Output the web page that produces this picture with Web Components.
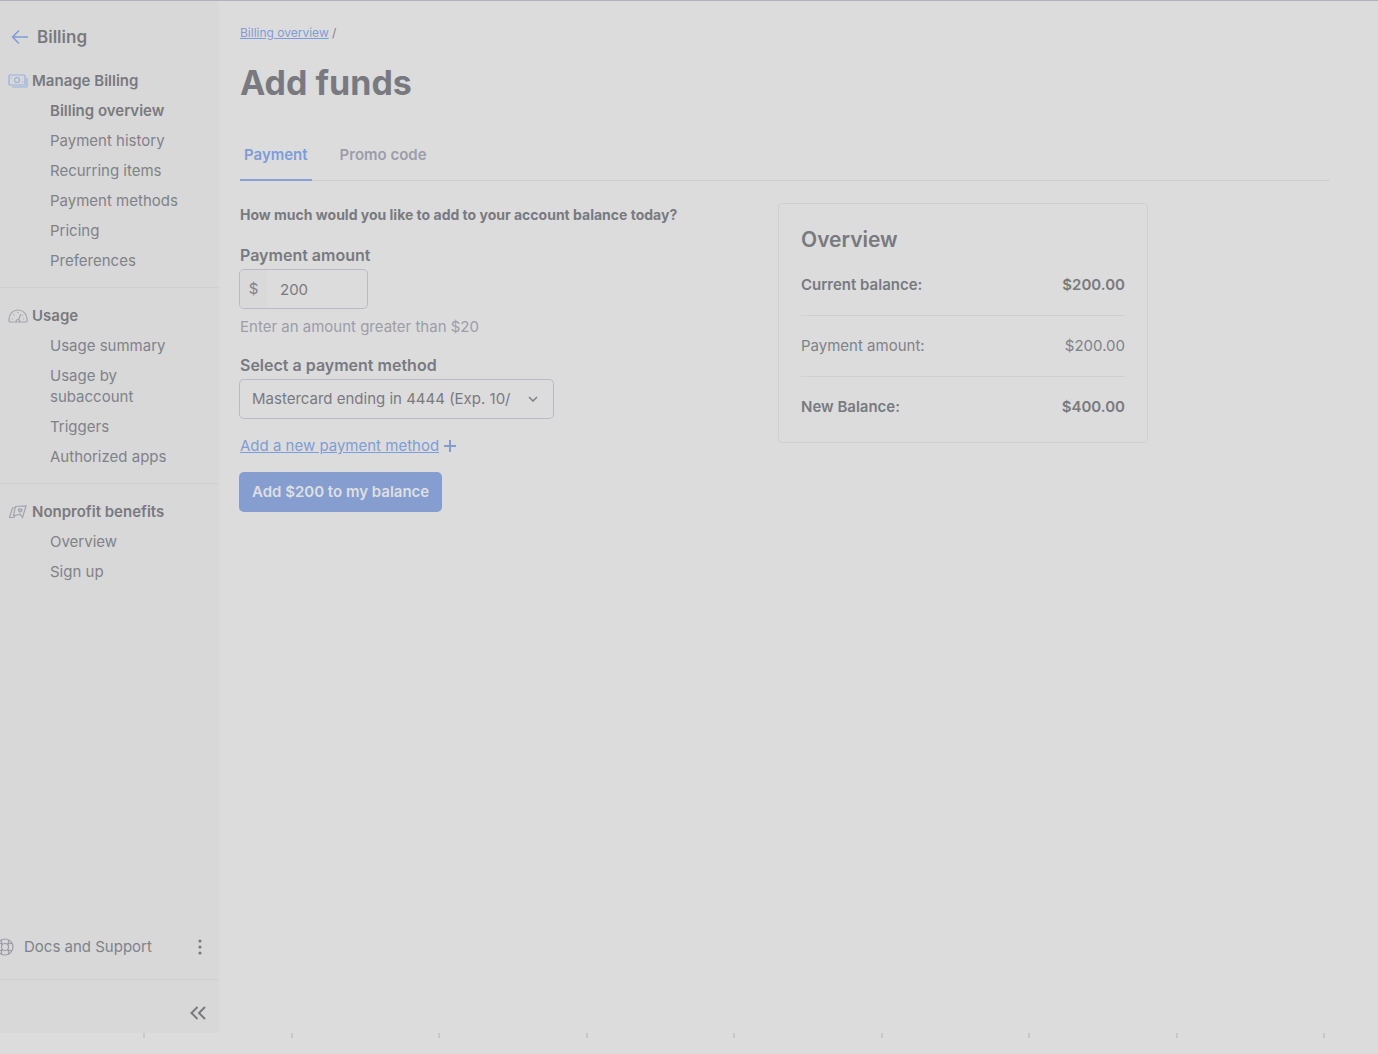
<!DOCTYPE html>
<html lang="en">
<head>
<meta charset="utf-8">
<meta name="viewport" content="width=device-width, initial-scale=1">
<title>Add funds</title>
<style>
  :root {
    --page: #dcdcdc;
    --sidebar: #d8d8d8;
    --line: #d0d0d2;
    --field-line: #b9bac6;
    --strong: #787a80;
    --text: #808289;
    --muted: #9c9da9;
    --blue: #7f9cd6;
    --button: #859ecf;
  }

  body {
    margin: 0;
    background: var(--page);
    color: var(--text);
    font: 14px/20px Inter, "Liberation Sans", sans-serif;
  }
</style>
</head>
<body>
<billing-app>
  <side-bar slot="sidebar" heading="Billing">
    <nav-group icon="money" heading="Manage Billing">
      <nav-item current>Billing overview</nav-item>
      <nav-item>Payment history</nav-item>
      <nav-item>Recurring items</nav-item>
      <nav-item>Payment methods</nav-item>
      <nav-item>Pricing</nav-item>
      <nav-item>Preferences</nav-item>
    </nav-group>
    <nav-group icon="gauge" heading="Usage">
      <nav-item>Usage summary</nav-item>
      <nav-item>Usage by subaccount</nav-item>
      <nav-item>Triggers</nav-item>
      <nav-item>Authorized apps</nav-item>
    </nav-group>
    <nav-group icon="cards" heading="Nonprofit benefits">
      <nav-item>Overview</nav-item>
      <nav-item>Sign up</nav-item>
    </nav-group>
  </side-bar>

  <page-header heading="Add funds">Billing overview</page-header>
  <tab-list></tab-list>
  <funds-layout>
    <payment-form></payment-form>
    <balance-overview slot="aside"></balance-overview>
  </funds-layout>

  <tick-ruler slot="footer" ticks="9"></tick-ruler>
</billing-app>

<script>
const ICONS = {
  back: ['0 0 18 16', '<path d="M17 8H1.500M8 1.500 1.500 8 8 14.500" stroke-width="1.500"/>'],
  money: ['0 0 20 14', '<rect x="1" y="1" width="16" height="10" rx="1"/><circle cx="9" cy="6" r="2.500"/><path d="M3.500 3.500v1M14.500 7.500v1M19 4v8a1 1 0 0 1-1 1H4"/>'],
  gauge: ['0 0 20 14', '<path d="M2 13a1 1 0 0 1-1-1v-2a9 9 0 0 1 18 0v2a1 1 0 0 1-1 1zM8 13c0-2 1-2.500 2-2.500s2 .5 2 2.500M10.500 10.500 13 5M4 10h1M5.500 5.500l.8.8M10 3v1M15 10h1M15 6l-.6.6"/>'],
  cards: ['0 0 20 14', '<path d="M7.500 1.500 18 1 14.500 12.500 12.500 9.500 5.500 10.500zM7 2.500 4.500 3 1.500 12.500h4.500l1-2M10.500 4.500c.5-1 1.700-.7 1.700.3.600-1 2-.8 1.800.3-.2 1-2 2-2.300 2.100-.4-.3-1.500-1.600-1.200-2.700z"/>'],
  ring: ['0 0 18 18', '<circle cx="9" cy="9" r="8"/><circle cx="9" cy="9" r="3.500"/><path d="M6.500 6.500C5 5 5.500 3.500 5.500 1.800M11.500 6.500C13 5 12.500 3.500 12.500 1.800M6.500 11.500C5 13 5.500 14.500 5.500 16.200M11.500 11.500C13 13 12.500 14.500 12.500 16.200M6.500 6.500C5 5 3.500 5.500 1.800 5.500M6.500 11.500C5 13 3.500 12.500 1.800 12.500M11.500 6.500C13 5 14.500 5.500 16.200 5.500M11.500 11.500C13 13 14.500 12.500 16.200 12.500"/>'],
  more: ['0 0 4 16', '<g fill="currentColor" stroke="none"><circle cx="2" cy="2" r="1.600"/><circle cx="2" cy="8" r="1.600"/><circle cx="2" cy="14" r="1.600"/></g>'],
  collapse: ['0 0 16 14', '<path d="M7.500 1 1.500 7l6 6M15 1 9 7l6 6" stroke-width="2"/>'],
  plus: ['0 0 12 12', '<path d="M6 0v12M0 6h12" stroke-width="2"/>'],
  chevron: ['0 0 10 6', '<path d="m1 1 4 4 4-4" stroke-width="1.600"/>'],
};

function icon(name) {
  const [box, shapes] = ICONS[name];
  const [, , w, h] = box.split(' ');
  return `<svg class="icon" width="${w}" height="${h}" viewBox="${box}" fill="none"
    stroke="currentColor" stroke-width="1.200" aria-hidden="true">${shapes}</svg>`;
}

const shared = `
  *, *::before { box-sizing: border-box; }
  a { color: inherit; text-decoration: none; }
  button { border: 0; padding: 0; background: none; color: inherit; font: inherit; cursor: pointer; }
  .icon { display: block; flex: none; }
`;

class BaseElement extends HTMLElement {
  constructor() {
    super();
    this.attachShadow({ mode: 'open' });
  }

  connectedCallback() {
    this.shadowRoot.innerHTML = `<style>${shared}</style>${this.template()}`;
  }
}

customElements.define('billing-app', class extends BaseElement {
  template() {
    return `
      <style>
        :host {
          display: grid;
          grid-template: 1fr auto / 219px minmax(0, 1fr);
          min-height: 100vh;
          box-sizing: border-box;
          border-top: 1px solid #b1b0bd;
        }
        ::slotted([slot="footer"]) { grid-column: 1 / -1; }
        main { padding: 22px 48px 24px 21px; }
      </style>
      <slot name="sidebar"></slot>
      <main><slot></slot></main>
      <slot name="footer"></slot>
    `;
  }
});

customElements.define('side-bar', class extends BaseElement {
  template() {
    return `
      <style>
        :host {
          display: flex;
          flex-direction: column;
          background: var(--sidebar);
        }
        header {
          display: flex;
          align-items: center;
          gap: 8px;
          padding: 24px 11px 0;
          color: var(--blue);
        }
        h2 { margin: 0; color: var(--strong); font-size: 17px; line-height: 24px; font-weight: 600; }
        nav { flex: 1; }
        .support {
          display: flex;
          align-items: center;
          justify-content: space-between;
          padding: 0 17px 22px 0;
          border-bottom: 1px solid var(--line);
        }
        .support a { display: flex; align-items: center; gap: 10px; margin-left: -4px; font-size: 15px; }
        .support .icon { color: var(--muted); }
        .support button .icon { color: var(--strong); }
        .collapse {
          display: flex;
          justify-content: flex-end;
          padding: 26px 13px 13px;
          color: var(--strong);
        }
      </style>
      <header><a href="#" aria-label="Back">${icon('back')}</a><h2>${this.getAttribute('heading')}</h2></header>
      <nav><slot></slot></nav>
      <div class="support">
        <a href="#">${icon('ring')}Docs and Support</a>
        <button type="button" aria-label="More">${icon('more')}</button>
      </div>
      <div class="collapse"><button type="button" aria-label="Collapse">${icon('collapse')}</button></div>
    `;
  }
});

customElements.define('nav-group', class extends BaseElement {
  template() {
    const name = this.getAttribute('icon');
    return `
      <style>
        :host {
          display: flex;
          flex-direction: column;
          gap: 9px;
          padding: 17px 8px 16px;
          line-height: 21px;
          border-bottom: 1px solid var(--line);
        }
        :host(:first-of-type) { padding-top: 21px; }
        :host(:last-of-type) { border-bottom: 0; }
        h3 {
          display: flex;
          align-items: center;
          gap: 4px;
          margin: 0;
          color: var(--strong);
          font-size: 15px;
          font-weight: 600;
          line-height: 21px;
        }
        .icon { color: ${name === 'money' ? '#98b0dc' : '#a2a4b0'}; }
      </style>
      <h3>${icon(name)}${this.getAttribute('heading')}</h3>
      <slot></slot>
    `;
  }
});

customElements.define('nav-item', class extends BaseElement {
  template() {
    return `
      <style>
        :host { display: block; padding: 0 32px 0 42px; font-size: 15px; }
        :host([current]) { color: var(--strong); font-weight: 600; }
        a { display: block; }
      </style>
      <a href="#"><slot></slot></a>
    `;
  }
});

customElements.define('page-header', class extends BaseElement {
  template() {
    return `
      <style>
        :host { display: block; }
        nav { font-size: 12px; }
        a { color: var(--blue); text-decoration: underline; }
        h1 { margin: 18px 0 0; color: var(--strong); font-size: 34px; line-height: 44px; font-weight: 700; }
      </style>
      <nav aria-label="Breadcrumb"><a href="#"><slot></slot></a> /</nav>
      <h1>${this.getAttribute('heading')}</h1>
    `;
  }
});

customElements.define('tab-list', class extends BaseElement {
  template() {
    return `
      <style>
        :host { display: block; margin-top: 40px; border-bottom: 1px solid var(--line); }
        div { display: flex; gap: 24px; margin-bottom: -1px; }
        button {
          padding: 0 4px 14px;
          border-bottom: 2px solid transparent;
          color: var(--muted);
          font-size: 15px;
          line-height: 20px;
          font-weight: 600;
        }
        button[aria-selected="true"] { color: var(--blue); border-color: #8c9fd4; }
      </style>
      <div role="tablist">
        <button type="button" role="tab" aria-selected="true">Payment</button>
        <button type="button" role="tab" aria-selected="false">Promo code</button>
      </div>
    `;
  }
});

customElements.define('funds-layout', class extends BaseElement {
  template() {
    return `
      <style>
        :host {
          display: grid;
          grid-template-columns: minmax(0, 490px) minmax(0, 370px);
          align-items: start;
          gap: 48px;
          padding-top: 22px;
        }
      </style>
      <slot></slot>
      <slot name="aside"></slot>
    `;
  }
});

customElements.define('payment-form', class extends BaseElement {
  template() {
    return `
      <style>
        :host { display: block; font-size: 15px; }
        form { display: flex; flex-direction: column; align-items: flex-start; }
        p { margin: 0; }
        .question { margin-top: 2px; color: var(--strong); font-size: 14px; font-weight: 700; }
        label { margin-top: 20px; color: var(--strong); font-size: 16px; font-weight: 600; }
        .field {
          display: flex;
          align-items: center;
          height: 38px;
          margin-top: 5px;
          border-radius: 4px;
          box-shadow: 0 0 0 1px var(--field-line);
        }
        .amount { width: 127px; }
        .prefix {
          flex: none;
          width: 27px;
          line-height: 38px;
          text-align: center;
          background: #d9d9d9;
          border-radius: 4px 0 0 4px;
        }
        input, select {
          width: 100%;
          min-width: 0;
          height: 38px;
          border: 0;
          outline: 0;
          background: none;
          color: var(--strong);
          font: inherit;
        }
        input { padding: 0 12px 0 13px; }
        .help { margin-top: 9px; color: var(--muted); }
        .help + label { margin-top: 18px; }
        .method { display: grid; grid-template-columns: minmax(0, 1fr) auto; width: 313px; padding-right: 15px; }
        select { appearance: none; padding: 0 8px 0 12px; }
        .add { display: flex; align-items: center; gap: 5px; margin-top: 18px; color: var(--blue); }
        .add span { text-decoration: underline; }
        .submit {
          height: 38px;
          margin-top: 17px;
          padding: 0 12px;
          border-radius: 4px;
          background: var(--button);
          box-shadow: 0 0 0 1px var(--button);
          color: #dedfe3;
          font-weight: 600;
        }
      </style>
      <form>
        <p class="question">How much would you like to add to your account balance today?</p>
        <label for="amount">Payment amount</label>
        <div class="field amount">
          <span class="prefix">$</span>
          <input id="amount" type="text" inputmode="decimal" value="200" aria-describedby="help">
        </div>
        <p class="help" id="help">Enter an amount greater than $20</p>
        <label for="method">Select a payment method</label>
        <div class="field method">
          <select id="method"><option>Mastercard ending in 4444 (Exp. 10/</option></select>
          ${icon('chevron')}
        </div>
        <a class="add" href="#"><span>Add a new payment method</span>${icon('plus')}</a>
        <button class="submit" type="button">Add $200 to my balance</button>
      </form>
    `;
  }
});

customElements.define('balance-overview', class extends BaseElement {
  template() {
    return `
      <style>
        :host {
          display: block;
          box-sizing: border-box;
          padding: 22px 22px 25px;
          border: 1px solid var(--line);
          border-radius: 4px;
        }
        h2 { margin: 0 0 21px; color: var(--strong); font-size: 21px; line-height: 28px; font-weight: 600; }
        dl { margin: 0; font-size: 15px; }
        div { display: flex; justify-content: space-between; }
        div + div { margin-top: 20px; padding-top: 20px; border-top: 1px solid var(--line); }
        dd { margin: 0; }
        .total { color: var(--strong); font-weight: 600; }
      </style>
      <h2>Overview</h2>
      <dl>
        <div class="total"><dt>Current balance:</dt><dd>$200.00</dd></div>
        <div><dt>Payment amount:</dt><dd>$200.00</dd></div>
        <div class="total"><dt>New Balance:</dt><dd>$400.00</dd></div>
      </dl>
    `;
  }
});

customElements.define('tick-ruler', class extends BaseElement {
  template() {
    const count = Number(this.getAttribute('ticks'));
    return `
      <style>
        :host {
          display: flex;
          justify-content: space-between;
          height: 21px;
          box-sizing: border-box;
          padding: 0 53px 0 143px;
        }
        i { width: 2px; height: 5px; background: #c8c8cb; }
      </style>
      ${'<i></i>'.repeat(count)}
    `;
  }
});
</script>
</body>
</html>
